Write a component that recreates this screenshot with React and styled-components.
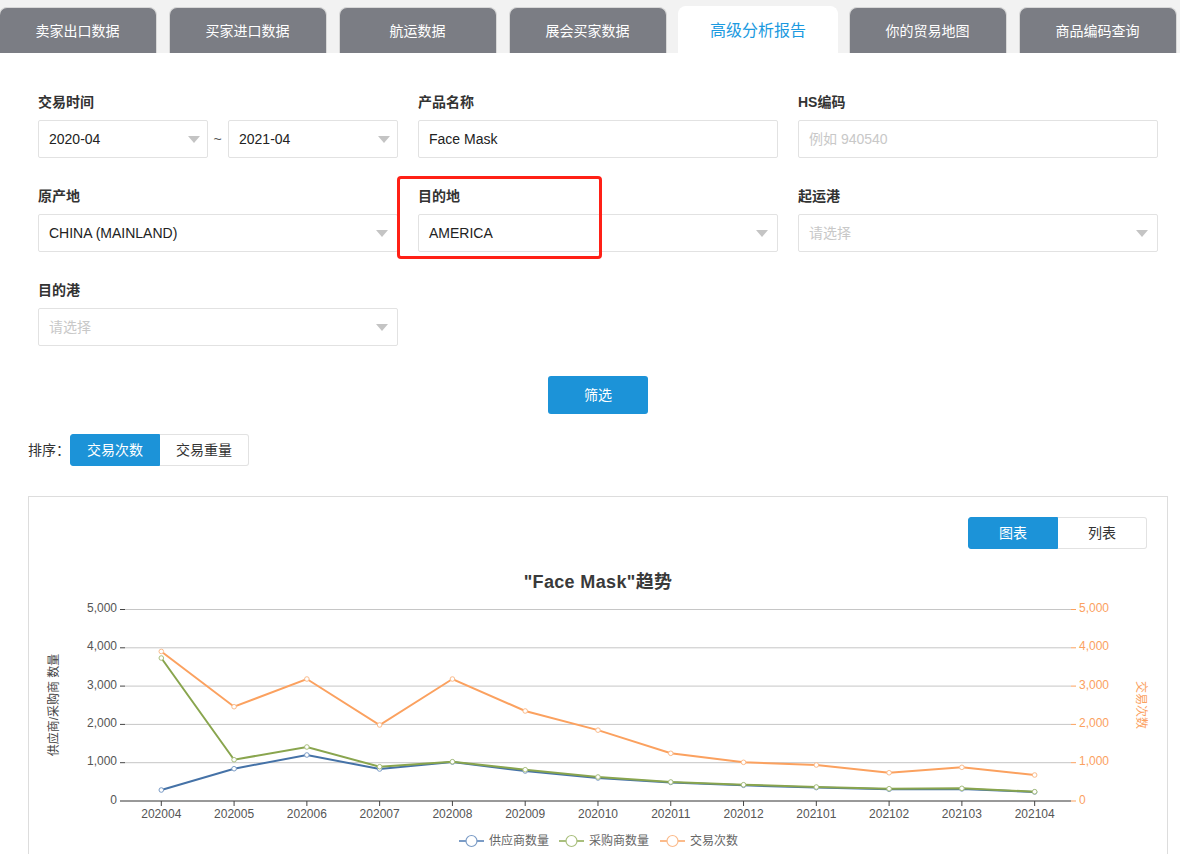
import React from 'react'
import styled, { createGlobalStyle } from 'styled-components'

const GlobalStyle = createGlobalStyle`
  html, body {
    margin: 0;
    height: 100%;
    overflow: hidden;
    background: #fff;
  }
  body {
    font-family: "Liberation Sans", "Noto Sans CJK SC", sans-serif;
    font-size: 14px;
    color: #333;
  }
`

const tabs = ['卖家出口数据', '买家进口数据', '航运数据', '展会买家数据', '高级分析报告', '你的贸易地图', '商品编码查询']

const months = ['202004', '202005', '202006', '202007', '202008', '202009', '202010', '202011', '202012', '202101', '202102', '202103', '202104']

const series = [
  { name: '供应商数量', color: '#4572a7', legendColor: '#7b9cc6', legendX: 459, data: [287, 843, 1201, 835, 1015, 783, 600, 485, 410, 350, 305, 315, 235] },
  { name: '采购商数量', color: '#89a54e', legendColor: '#a9bf7d', legendX: 559, data: [3733, 1078, 1410, 895, 1026, 817, 627, 496, 425, 365, 321, 331, 243] },
  { name: '交易次数', color: '#fba15f', legendColor: '#fbbb8b', legendX: 660, data: [3905, 2462, 3185, 1985, 3185, 2350, 1850, 1245, 1010, 940, 738, 879, 679] },
]

const ticks = [0, 1000, 2000, 3000, 4000, 5000]
const xAt = (i) => 161.3 + i * 72.78
const yAt = (v) => 801 - v * 0.0383

const Chart = () => (
  <ChartSvg viewBox="29 549 1138 320">
    <text x="598" y="588" textAnchor="middle" fontSize="18" fontWeight="700" letterSpacing="0.35" fill="#3a3a3a">"Face Mask"趋势</text>

    {ticks.map((t) => (
      <g key={t}>
        {t > 0 && <line x1="125" x2="1071" y1={yAt(t)} y2={yAt(t)} stroke="#c6c6c6" />}
        {t > 0 && <line x1="120" x2="125" y1={yAt(t)} y2={yAt(t)} stroke="#444" />}
        <line x1="1071" x2="1076" y1={yAt(t)} y2={yAt(t)} stroke="#fba15f" />
        <text x="117" y={yAt(t) + 2.5} textAnchor="end" fontSize="12" fill="#555">{t.toLocaleString('en-US')}</text>
        <text x="1079" y={yAt(t) + 2.5} fontSize="12" fill="#fba15f">{t.toLocaleString('en-US')}</text>
      </g>
    ))}

    <line x1="120" x2="1071" y1="801" y2="801" stroke="#333" />
    {months.map((m, i) => (
      <g key={m}>
        <line x1={xAt(i)} x2={xAt(i)} y1="801" y2="806" stroke="#444" />
        <text x={xAt(i)} y="818" textAnchor="middle" fontSize="12" fill="#555">{m}</text>
      </g>
    ))}

    <text transform="translate(58 705) rotate(-90)" textAnchor="middle" fontSize="12" fill="#444">供应商/采购商 数量</text>
    <text transform="translate(1137 705) rotate(90)" textAnchor="middle" fontSize="12" fill="#fba15f">交易次数</text>

    {series.map((s) => (
      <g key={s.name}>
        <polyline fill="none" stroke={s.color} strokeWidth="2" points={s.data.map((v, i) => `${xAt(i)},${yAt(v)}`).join(' ')} />
        {s.data.map((v, i) => (
          <circle key={i} cx={xAt(i)} cy={yAt(v)} r="2.3" fill="#fff" stroke={s.legendColor} strokeWidth="1" />
        ))}
        <line x1={s.legendX} x2={s.legendX + 25} y1="841" y2="841" stroke={s.legendColor} strokeWidth="2" />
        <circle cx={s.legendX + 12.5} cy="841" r="5.5" fill="#fff" stroke={s.legendColor} strokeWidth="1.2" />
        <text x={s.legendX + 30} y="845" fontSize="12" fill="#666">{s.name}</text>
      </g>
    ))}
  </ChartSvg>
)

const App = () => {
  return (
    <>
      <GlobalStyle />
      <TabBar>
        {tabs.map((t, i) => (
          <Tab key={t} $active={i === 4}>{t}</Tab>
        ))}
      </TabBar>
      <Panel>
        <FormGrid>
          <Field>
            <Label>交易时间</Label>
            <DateRow>
              <Select>2020-04<Caret $narrow /></Select>
              <Tilde>~</Tilde>
              <Select>2021-04<Caret $narrow /></Select>
            </DateRow>
          </Field>
          <Field>
            <Label>产品名称</Label>
            <Select>Face Mask</Select>
          </Field>
          <Field>
            <Label>HS编码</Label>
            <Select $empty>例如 940540</Select>
          </Field>
          <Field>
            <Label>原产地</Label>
            <Select>CHINA (MAINLAND)<Caret /></Select>
          </Field>
          <Field>
            <Label>目的地</Label>
            <Select>AMERICA<Caret /></Select>
            <Highlight />
          </Field>
          <Field>
            <Label>起运港</Label>
            <Select $empty>请选择<Caret /></Select>
          </Field>
          <Field>
            <Label>目的港</Label>
            <Select $empty>请选择<Caret /></Select>
          </Field>
        </FormGrid>
        <ButtonRow>
          <FilterButton>筛选</FilterButton>
        </ButtonRow>
        <SortRow>
          <SortLabel>排序：</SortLabel>
          <Toggle>
            <ToggleItem $active $width={90}>交易次数</ToggleItem>
            <ToggleItem $width={89}>交易重量</ToggleItem>
          </Toggle>
        </SortRow>
        <Card>
          <CardHead>
            <Toggle>
              <ToggleItem $active $width={90}>图表</ToggleItem>
              <ToggleItem $width={89}>列表</ToggleItem>
            </Toggle>
          </CardHead>
          <Chart />
        </Card>
      </Panel>
    </>
  )
}

export default App

const TabBar = styled.div`
  display: flex;
  gap: 12px;
  height: 46px;
  padding-top: 7px;
  margin-left: -1px;
  background: #f2f2f2;
  overflow: hidden;
`
const Tab = styled.div`
  flex: 0 0 auto;
  box-sizing: border-box;
  width: ${(p) => (p.$active ? '160px' : '158px')};
  height: ${(p) => (p.$active ? '47px' : '46px')};
  margin: ${(p) => (p.$active ? '-1px -1px 0' : '0')};
  display: flex;
  align-items: center;
  justify-content: center;
  padding: ${(p) => (p.$active ? '0 0 2px' : '0 1px 2px 0')};
  border: 1px solid ${(p) => (p.$active ? '#fff' : '#d8d8d8')};
  border-bottom: 0;
  border-radius: 8px 8px 0 0;
  background: ${(p) => (p.$active ? '#fff' : '#7b7d84')};
  color: ${(p) => (p.$active ? '#1c9ae0' : '#fff')};
  font-size: ${(p) => (p.$active ? '16px' : '14px')};
`
const Panel = styled.div`
  padding: 39px 12px 0 28px;
  background: #fff;
`
const FormGrid = styled.div`
  display: grid;
  grid-template-columns: repeat(3, 360px);
  column-gap: 20px;
  row-gap: 28px;
  margin-left: 10px;
`
const Field = styled.div`
  position: relative;
  display: flex;
  flex-direction: column;
`
const Label = styled.div`
  height: 20px;
  line-height: 20px;
  margin-bottom: 8px;
  font-size: 14px;
  font-weight: 700;
  color: #333;
`
const DateRow = styled.div`
  display: flex;
  align-items: center;
`
const Tilde = styled.span`
  width: 19px;
  padding-right: 1px;
  text-align: center;
  color: #555;
`
const Select = styled.div`
  position: relative;
  flex: 1;
  box-sizing: border-box;
  height: 38px;
  line-height: 36px;
  padding: 0 10px;
  border: 1px solid #e2e2e2;
  border-radius: 2px;
  font-size: 14px;
  color: ${(p) => (p.$empty ? '#c8c8c8' : '#222')};
`
const Caret = styled.i`
  position: absolute;
  right: ${(p) => (p.$narrow ? '7px' : '9px')};
  top: 15px;
  width: 0;
  height: 0;
  border-left: 6px solid transparent;
  border-right: 6px solid transparent;
  border-top: 7px solid #c4c4c4;
`
const Highlight = styled.div`
  position: absolute;
  left: -21px;
  top: -10px;
  width: 205px;
  height: 83px;
  box-sizing: border-box;
  border: 3px solid #ff2016;
  border-radius: 4px;
  pointer-events: none;
`
const ButtonRow = styled.div`
  display: flex;
  justify-content: center;
  margin-top: 30px;
`
const FilterButton = styled.div`
  width: 100px;
  height: 38px;
  line-height: 38px;
  text-align: center;
  border-radius: 3px;
  background: #1c93d8;
  color: #fff;
  font-size: 14px;
`
const SortRow = styled.div`
  display: flex;
  align-items: center;
  margin-top: 20px;
`
const SortLabel = styled.span`
  flex: 0 0 42px;
  padding-bottom: 2px;
  font-size: 14px;
  white-space: nowrap;
  color: #333;
`
const Toggle = styled.div`
  display: flex;
  height: 32px;
`
const ToggleItem = styled.div`
  box-sizing: border-box;
  width: ${(p) => p.$width}px;
  line-height: 30px;
  text-align: center;
  font-size: 14px;
  border: 1px solid ${(p) => (p.$active ? '#1c93d8' : '#e2e2e2')};
  border-left-width: ${(p) => (p.$active ? '1px' : '0')};
  border-radius: ${(p) => (p.$active ? '3px 0 0 3px' : '0 3px 3px 0')};
  background: ${(p) => (p.$active ? '#1c93d8' : '#fff')};
  color: ${(p) => (p.$active ? '#fff' : '#333')};
`
const Card = styled.div`
  width: 1140px;
  box-sizing: border-box;
  margin-top: 30px;
  border: 1px solid #ddd;
`
const CardHead = styled.div`
  display: flex;
  justify-content: flex-end;
  padding: 20px 20px 0 0;
`
const ChartSvg = styled.svg`
  display: block;
  width: 1138px;
  height: 320px;
  font-family: "Liberation Sans", "Noto Sans CJK SC", sans-serif;
`
